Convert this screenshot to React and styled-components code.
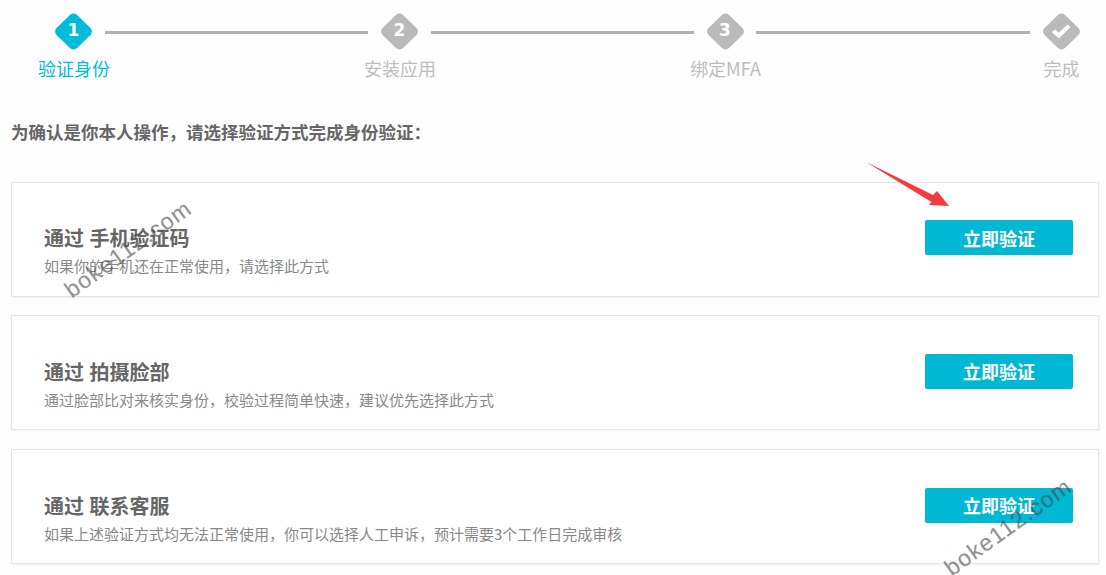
import React from "react";
import styled, { createGlobalStyle } from "styled-components";

const Global = createGlobalStyle`
  html, body { margin: 0; padding: 0; background: #fefefe; overflow: hidden; }
  body { font-family: "Noto Sans CJK SC", "Open Sans", sans-serif; color: #666; }
`;
const Page = styled.div`
  position: relative;
  width: 1106px;
  height: 575px;
  overflow: hidden;
  box-sizing: border-box;
  padding: 13px 7px 0 11px;
`;
const Stepper = styled.div`
  display: flex;
  align-items: flex-start;
  padding-left: 28px;
  height: 71px;
`;
const Step = styled.div`
  width: ${p => p.$w}px;
  flex: none;
  display: flex;
  flex-direction: column;
  align-items: center;
  gap: 6px;
`;
const Diamond = styled.div`
  position: relative;
  width: 37px;
  height: 37px;
  margin-left: -1px;
  display: flex;
  align-items: center;
  justify-content: center;
  flex: none;
  color: #fff;
  font: 700 17px/1 "DejaVu Sans", sans-serif;
  &::before {
    content: "";
    position: absolute;
    left: 4px;
    top: 4px;
    width: 29px;
    height: 29px;
    border-radius: 5px;
    background: ${p => (p.$active ? "#00bcd9" : "#bababa")};
    transform: scaleY(0.97) rotate(45deg);
  }
  & > * { position: relative; }
`;
const Glyph = styled.span`
  margin-top: -2px;
`;
const Label = styled.div`
  font-size: 18px;
  line-height: 24px;
  white-space: nowrap;
  color: ${p => (p.$active ? "#00bcd9" : "#bdbdbd")};
`;
const Connector = styled.div`
  flex: none;
  width: ${p => p.$w}px;
  height: 3px;
  margin: 18px ${p => p.$mr}px 0 -4px;
  background: #b1b1b1;
`;
const Heading = styled.h2`
  margin: 36px 0 37.8px;
  font-size: 17.5px;
  line-height: 24px;
  font-weight: 700;
  color: #666;
`;
const Cards = styled.div`
  display: flex;
  flex-direction: column;
  gap: 18.6px;
`;
const Card = styled.div`
  box-sizing: border-box;
  height: 115px;
  padding: 37.6px 25px 0 32px;
  display: flex;
  justify-content: space-between;
  align-items: flex-start;
  background: #fff;
  border: 1px solid #e6e6e6;
  box-shadow: 1px 1px 2px rgba(0, 0, 0, 0.06);
`;
const CardText = styled.div`
  display: flex;
  flex-direction: column;
  padding-top: 3px;
`;
const CardTitle = styled.div`
  font-size: 20px;
  line-height: 29px;
  font-weight: 700;
  word-spacing: 1px;
  color: #666;
`;
const CardDesc = styled.div`
  font-size: 15px;
  line-height: 28px;
  color: #888;
`;
const Button = styled.button`
  width: 148px;
  height: 35px;
  border: 0;
  padding: 0;
  border-radius: 2px;
  background: #00b7d4;
  color: #fff;
  font-family: inherit;
  font-size: 18px;
  font-weight: 700;
`;
const Watermark = styled.div`
  position: absolute;
  left: ${p => p.$x}px;
  top: ${p => p.$y}px;
  font: 400 23px/1 "Liberation Sans", sans-serif;
  letter-spacing: 1.2px;
  white-space: nowrap;
  color: rgba(70, 70, 70, 0.45);
  text-shadow: 0 0 1px rgba(70, 70, 70, 0.3);
  transform: rotate(-35.5deg);
  transform-origin: left bottom;
  pointer-events: none;
`;
const Arrow = styled.svg`
  position: absolute;
  left: 860px;
  top: 156px;
`;

const steps = [
  { key: "1", label: "验证身份", w: 70, active: true, line: 263, mr: -3 },
  { key: "2", label: "安装应用", w: 70, line: 263, mr: -3 },
  { key: "3", label: "绑定MFA", w: 69, line: 274, mr: 14 },
  { key: "check", label: "完成", w: 35 },
];
const methods = [
  { title: "通过 手机验证码", desc: "如果你的手机还在正常使用，请选择此方式" },
  { title: "通过 拍摄脸部", desc: "通过脸部比对来核实身份，校验过程简单快速，建议优先选择此方式" },
  { title: "通过 联系客服", desc: "如果上述验证方式均无法正常使用，你可以选择人工申诉，预计需要3个工作日完成审核" },
];

export default function App() {
  return (
    <Page>
      <Global />
      <Stepper>
        {steps.map(s => (
          <React.Fragment key={s.key}>
            <Step $w={s.w}>
              <Diamond $active={s.active}>
                {s.key === "check" ? (
                  <svg width="20" height="15" viewBox="0 0 20 15">
                    <path d="M0.5 8 L4.5 5.5 L7.5 9 L16.5 0.5 L19.5 3 L8 14.5 Z" fill="#fff" />
                  </svg>
                ) : (
                  <Glyph>{s.key}</Glyph>
                )}
              </Diamond>
              <Label $active={s.active}>{s.label}</Label>
            </Step>
            {s.line && <Connector $w={s.line} $mr={s.mr} />}
          </React.Fragment>
        ))}
      </Stepper>
      <Heading>为确认是你本人操作，请选择验证方式完成身份验证：</Heading>
      <Cards>
        {methods.map(m => (
          <Card key={m.title}>
            <CardText>
              <CardTitle>{m.title}</CardTitle>
              <CardDesc>{m.desc}</CardDesc>
            </CardText>
            <Button>立即验证</Button>
          </Card>
        ))}
      </Cards>
      <Arrow width="100" height="60" viewBox="0 0 100 60">
        <polygon points="6,6 73,39 77,35 89,50 69,49 71.5,46" fill="#f73a3c" />
      </Arrow>
      <Watermark $x={74} $y={279}>boke112.com</Watermark>
      <Watermark $x={954} $y={557}>boke112.com</Watermark>
    </Page>
  );
}
